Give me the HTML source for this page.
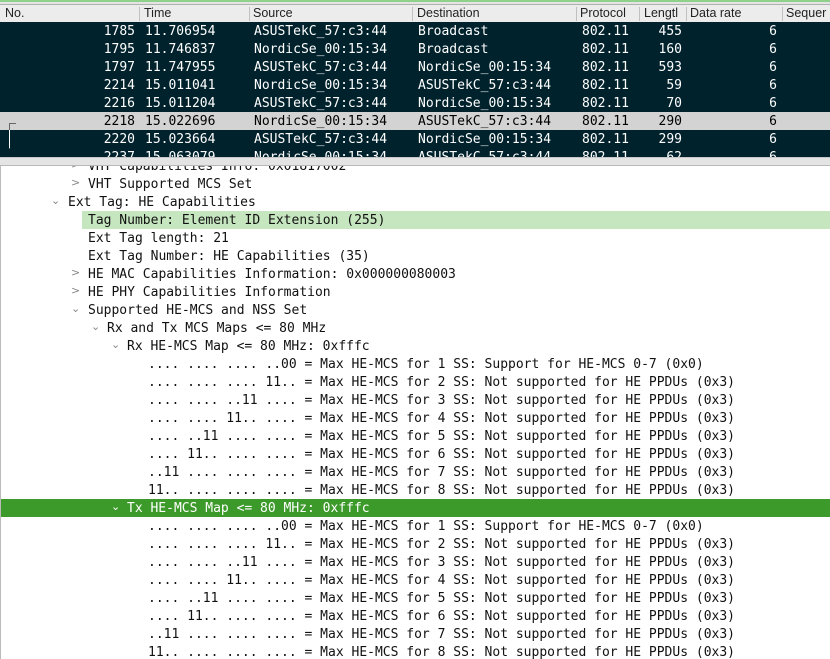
<!DOCTYPE html>
<html><head><meta charset="utf-8"><style>
*{margin:0;padding:0;box-sizing:border-box}
body{width:830px;height:659px;overflow:hidden;background:#fff;position:relative;font-family:"DejaVu Sans Mono","Liberation Mono",monospace;font-size:13px}
.topg{position:absolute;left:0;top:0;width:830px;height:2px;background:#8fd18a}
.top2{position:absolute;left:0;top:2px;width:830px;height:3px;background:#e4e4e4;border-bottom:1px solid #b0b0b0}
.hdr{position:absolute;left:0;top:5px;width:830px;height:17px;background:#ececec;font-family:"Liberation Sans",sans-serif;font-size:12.5px;color:#222}
.hdr span{position:absolute;top:1px}
.hdr i{position:absolute;top:2px;width:1px;height:14px;background:#c0c0c0}
.list{position:absolute;left:0;top:22px;width:830px;height:135px;background:#00222c;overflow:hidden}
.row{position:absolute;left:0;width:830px;height:18px;color:#fff;white-space:pre}
.row.sel{background:#d3d3d3;color:#000}
.row span{position:absolute;top:2px}
.r{text-align:right}
.bar{position:absolute;left:0;top:157px;width:830px;height:9px;background:#e4e4e4;border-top:1px solid #c8c8c8;border-bottom:1px solid #b8b8b8}
.det{position:absolute;left:0;top:166px;width:830px;height:493px;overflow:hidden;border-left:1px solid #bbb}
.ln{position:absolute;left:0;width:830px;height:18px;white-space:pre;color:#111}
.ln span{position:absolute;top:2px}
.ln span.ch{top:1px;color:#888;font-family:"DejaVu Sans",sans-serif;font-size:11px}
.hl{background:#c6e6bf}
.gr{background:#3c9a2a;color:#fff}
.gr span.ch{color:#fff}
</style></head><body>
<div class="topg"></div><div class="top2"></div>
<div class="hdr">
<span style="left:5px">No.</span><i style="left:139px"></i>
<span style="left:144px">Time</span><i style="left:249px"></i>
<span style="left:253px">Source</span><i style="left:412px"></i>
<span style="left:417px">Destination</span><i style="left:576px"></i>
<span style="left:580px">Protocol</span><i style="left:639px"></i>
<span style="left:644px">Lengtl</span><i style="left:686px"></i>
<span style="left:690px">Data rate</span><i style="left:782px"></i>
<span style="left:786px">Sequer</span>
</div>
<div class="list">
<div class="row" style="top:0"><span class="r" style="left:90px;width:45px">1785</span><span style="left:145px">11.706954</span><span style="left:254px">ASUSTekC_57:c3:44</span><span style="left:418px">Broadcast</span><span style="left:582px">802.11</span><span class="r" style="left:640px;width:42px">455</span><span class="r" style="left:740px;width:37px">6</span></div>
<div class="row" style="top:18px"><span class="r" style="left:90px;width:45px">1795</span><span style="left:145px">11.746837</span><span style="left:254px">NordicSe_00:15:34</span><span style="left:418px">Broadcast</span><span style="left:582px">802.11</span><span class="r" style="left:640px;width:42px">160</span><span class="r" style="left:740px;width:37px">6</span></div>
<div class="row" style="top:36px"><span class="r" style="left:90px;width:45px">1797</span><span style="left:145px">11.747955</span><span style="left:254px">ASUSTekC_57:c3:44</span><span style="left:418px">NordicSe_00:15:34</span><span style="left:582px">802.11</span><span class="r" style="left:640px;width:42px">593</span><span class="r" style="left:740px;width:37px">6</span></div>
<div class="row" style="top:54px"><span class="r" style="left:90px;width:45px">2214</span><span style="left:145px">15.011041</span><span style="left:254px">NordicSe_00:15:34</span><span style="left:418px">ASUSTekC_57:c3:44</span><span style="left:582px">802.11</span><span class="r" style="left:640px;width:42px">59</span><span class="r" style="left:740px;width:37px">6</span></div>
<div class="row" style="top:72px"><span class="r" style="left:90px;width:45px">2216</span><span style="left:145px">15.011204</span><span style="left:254px">ASUSTekC_57:c3:44</span><span style="left:418px">NordicSe_00:15:34</span><span style="left:582px">802.11</span><span class="r" style="left:640px;width:42px">70</span><span class="r" style="left:740px;width:37px">6</span></div>
<div class="row sel" style="top:90px"><span class="r" style="left:90px;width:45px">2218</span><span style="left:145px">15.022696</span><span style="left:254px">NordicSe_00:15:34</span><span style="left:418px">ASUSTekC_57:c3:44</span><span style="left:582px">802.11</span><span class="r" style="left:640px;width:42px">290</span><span class="r" style="left:740px;width:37px">6</span></div>
<div class="row" style="top:108px"><span class="r" style="left:90px;width:45px">2220</span><span style="left:145px">15.023664</span><span style="left:254px">ASUSTekC_57:c3:44</span><span style="left:418px">NordicSe_00:15:34</span><span style="left:582px">802.11</span><span class="r" style="left:640px;width:42px">299</span><span class="r" style="left:740px;width:37px">6</span></div>
<div class="row" style="top:126px"><span class="r" style="left:90px;width:45px">2237</span><span style="left:145px">15.063079</span><span style="left:254px">NordicSe_00:15:34</span><span style="left:418px">ASUSTekC_57:c3:44</span><span style="left:582px">802.11</span><span class="r" style="left:640px;width:42px">62</span><span class="r" style="left:740px;width:37px">6</span></div>
<div style="position:absolute;left:9px;top:101px;width:1px;height:26px;background:#666"></div>
<div style="position:absolute;left:9px;top:101px;width:7px;height:1px;background:#666"></div>
<div style="position:absolute;left:9px;top:108px;width:1px;height:18px;background:#fff"></div>
</div>
<div class="bar"></div>
<div class="det">
<div class="ln" style="top:-9px"><span class="ch" style="left:70px">&gt;</span><span style="left:87px">VHT Capabilities Info: 0x01817002</span></div>
<div class="ln" style="top:9px"><span class="ch" style="left:70px">&gt;</span><span style="left:87px">VHT Supported MCS Set</span></div>
<div class="ln" style="top:27px"><span class="ch" style="left:50px">&#8964;</span><span style="left:67px">Ext Tag: HE Capabilities</span></div>
<div class="ln hl" style="top:45px;left:81px;width:749px"><span style="left:6px">Tag Number: Element ID Extension (255)</span></div>
<div class="ln" style="top:63px"><span style="left:87px">Ext Tag length: 21</span></div>
<div class="ln" style="top:81px"><span style="left:87px">Ext Tag Number: HE Capabilities (35)</span></div>
<div class="ln" style="top:99px"><span class="ch" style="left:70px">&gt;</span><span style="left:87px">HE MAC Capabilities Information: 0x000000080003</span></div>
<div class="ln" style="top:117px"><span class="ch" style="left:70px">&gt;</span><span style="left:87px">HE PHY Capabilities Information</span></div>
<div class="ln" style="top:135px"><span class="ch" style="left:70px">&#8964;</span><span style="left:87px">Supported HE-MCS and NSS Set</span></div>
<div class="ln" style="top:153px"><span class="ch" style="left:90px">&#8964;</span><span style="left:106px">Rx and Tx MCS Maps &lt;= 80 MHz</span></div>
<div class="ln" style="top:171px"><span class="ch" style="left:110px">&#8964;</span><span style="left:126px">Rx HE-MCS Map &lt;= 80 MHz: 0xfffc</span></div>
<div class="ln" style="top:189px"><span style="left:147px">.... .... .... ..00 = Max HE-MCS for 1 SS: Support for HE-MCS 0-7 (0x0)</span></div>
<div class="ln" style="top:207px"><span style="left:147px">.... .... .... 11.. = Max HE-MCS for 2 SS: Not supported for HE PPDUs (0x3)</span></div>
<div class="ln" style="top:225px"><span style="left:147px">.... .... ..11 .... = Max HE-MCS for 3 SS: Not supported for HE PPDUs (0x3)</span></div>
<div class="ln" style="top:243px"><span style="left:147px">.... .... 11.. .... = Max HE-MCS for 4 SS: Not supported for HE PPDUs (0x3)</span></div>
<div class="ln" style="top:261px"><span style="left:147px">.... ..11 .... .... = Max HE-MCS for 5 SS: Not supported for HE PPDUs (0x3)</span></div>
<div class="ln" style="top:279px"><span style="left:147px">.... 11.. .... .... = Max HE-MCS for 6 SS: Not supported for HE PPDUs (0x3)</span></div>
<div class="ln" style="top:297px"><span style="left:147px">..11 .... .... .... = Max HE-MCS for 7 SS: Not supported for HE PPDUs (0x3)</span></div>
<div class="ln" style="top:315px"><span style="left:147px">11.. .... .... .... = Max HE-MCS for 8 SS: Not supported for HE PPDUs (0x3)</span></div>
<div class="ln gr" style="top:333px"><span class="ch" style="left:110px">&#8964;</span><span style="left:126px">Tx HE-MCS Map &lt;= 80 MHz: 0xfffc</span></div>
<div class="ln" style="top:351px"><span style="left:147px">.... .... .... ..00 = Max HE-MCS for 1 SS: Support for HE-MCS 0-7 (0x0)</span></div>
<div class="ln" style="top:369px"><span style="left:147px">.... .... .... 11.. = Max HE-MCS for 2 SS: Not supported for HE PPDUs (0x3)</span></div>
<div class="ln" style="top:387px"><span style="left:147px">.... .... ..11 .... = Max HE-MCS for 3 SS: Not supported for HE PPDUs (0x3)</span></div>
<div class="ln" style="top:405px"><span style="left:147px">.... .... 11.. .... = Max HE-MCS for 4 SS: Not supported for HE PPDUs (0x3)</span></div>
<div class="ln" style="top:423px"><span style="left:147px">.... ..11 .... .... = Max HE-MCS for 5 SS: Not supported for HE PPDUs (0x3)</span></div>
<div class="ln" style="top:441px"><span style="left:147px">.... 11.. .... .... = Max HE-MCS for 6 SS: Not supported for HE PPDUs (0x3)</span></div>
<div class="ln" style="top:459px"><span style="left:147px">..11 .... .... .... = Max HE-MCS for 7 SS: Not supported for HE PPDUs (0x3)</span></div>
<div class="ln" style="top:477px"><span style="left:147px">11.. .... .... .... = Max HE-MCS for 8 SS: Not supported for HE PPDUs (0x3)</span></div>
</div>
</body></html>
